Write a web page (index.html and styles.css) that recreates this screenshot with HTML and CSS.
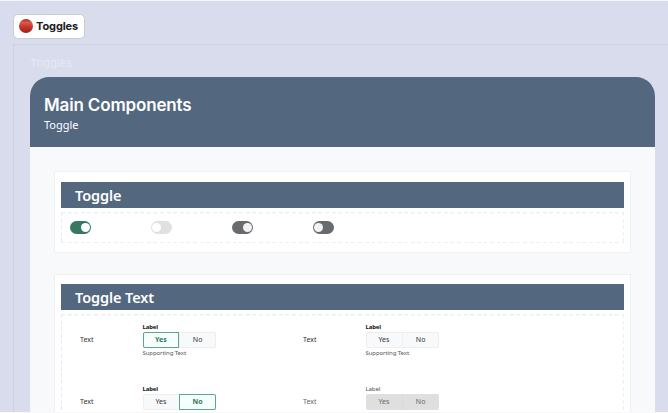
FILE: index.html
```html
<!DOCTYPE html>
<html lang="en">
<head>
    <meta charset="UTF-8">
    <meta name="viewport" content="width=device-width, initial-scale=1.0">
    <title>Toggles</title>
    <link rel="stylesheet" href="styles.css">
</head>
<body>
    <div class="page-tag">
        <svg class="dot" width="14" height="14" viewBox="0 0 14 14">
            <defs>
                <linearGradient id="red" x1="0" y1="0" x2="0" y2="1">
                    <stop offset="0" stop-color="#a92a24"/>
                    <stop offset="0.25" stop-color="#dc5a4c"/>
                    <stop offset="0.55" stop-color="#cb3529"/>
                    <stop offset="1" stop-color="#96231e"/>
                </linearGradient>
            </defs>
            <circle cx="7" cy="7" r="7" fill="url(#red)"/>
        </svg>
        <span>Toggles</span>
    </div>

    <div class="frame">
        <div class="frame-name">Toggles</div>
        <main class="panel">
            <header>
                <h1>Main Components</h1>
                <p>Toggle</p>
            </header>

            <section class="card">
                <h2>Toggle</h2>
                <div class="variants switches">
                    <span class="switch on green"></span>
                    <span class="switch off light"></span>
                    <span class="switch on gray"></span>
                    <span class="switch off gray"></span>
                </div>
            </section>

            <section class="card">
                <h2>Toggle Text</h2>
                <div class="variants fields">
                    <div class="field">
                        <span class="name">Text</span>
                        <div class="control">
                            <b class="label">Label</b>
                            <div class="choice"><span class="selected">Yes</span><span>No</span></div>
                            <span class="support">Supporting Text</span>
                        </div>
                    </div>
                    <div class="field">
                        <span class="name">Text</span>
                        <div class="control">
                            <b class="label">Label</b>
                            <div class="choice"><span>Yes</span><span>No</span></div>
                            <span class="support">Supporting Text</span>
                        </div>
                    </div>
                    <div class="field">
                        <span class="name">Text</span>
                        <div class="control">
                            <b class="label">Label</b>
                            <div class="choice"><span>Yes</span><span class="selected">No</span></div>
                            <span class="support">Supporting Text</span>
                        </div>
                    </div>
                    <div class="field disabled">
                        <span class="name">Text</span>
                        <div class="control">
                            <b class="label">Label</b>
                            <div class="choice"><span>Yes</span><span>No</span></div>
                            <span class="support">Supporting Text</span>
                        </div>
                    </div>
                </div>
            </section>
        </main>
    </div>
</body>
</html>
```

FILE: styles.css
```css
* {
    box-sizing: border-box;
}
html {
    background: #f8f8fb;
    overflow: hidden;
}
body {
    margin: 0;
    height: 412px;
    padding: 13px 0 0 13px;
    border-top: 1px solid #f6f6fa;
    background: #d9dcec;
    font-family: "Noto Sans", sans-serif;
    overflow: hidden;
}
.page-tag {
    display: flex;
    align-items: center;
    gap: 3px;
    width: 72px;
    height: 25px;
    padding: 0 0 1px 5px;
    border: 1px solid #cccdd4;
    border-radius: 5px;
    background: #fff;
    color: #222;
    font: bold 11px Inter, sans-serif;
    letter-spacing: -0.1px;
}
.dot {
    flex: none;
}
.frame {
    height: 373px;
    margin-top: 5px;
    padding: 10px 0 0 16px;
    border: 1px solid #cdd0e0;
    border-width: 1px 0 0 1px;
    overflow: hidden;
}
.frame-name {
    height: 22px;
    color: #e6e8f5;
    font: 11px/16px Inter, sans-serif;
    letter-spacing: 0.15px;
}
.panel {
    width: 625px;
    height: 340px;
    border-radius: 19px 19px 0 0;
    background: #f8f9fb;
    overflow: hidden;
}
header {
    height: 70px;
    padding: 18px 14px 0;
    background: #53677f;
    color: #fff;
}
h1 {
    margin: 0;
    font: 600 17px/21px Inter, sans-serif;
    letter-spacing: -0.15px;
}
header p {
    margin: 0;
    font-size: 11px;
    line-height: 17px;
}
.card {
    width: 577px;
    margin: 24px 0 0 24px;
    padding: 10px 6px 9px;
    border: 1px solid #eef0f2;
    background: #fff;
}
.card + .card {
    margin-top: 21px;
    padding-top: 9px;
}
h2 {
    height: 26px;
    margin: 0 0 4px;
    padding-left: 14px;
    background: #53677f;
    color: #fff;
    font: 600 14.5px/26px "Noto Sans", sans-serif;
    letter-spacing: -0.1px;
}
.variants {
    width: 563px;
    background:
        repeating-linear-gradient(90deg, #eeeff1 0 4px, transparent 4px 6.6px) top / 100% 1.5px no-repeat,
        repeating-linear-gradient(90deg, #eeeff1 0 4px, transparent 4px 6.6px) bottom / 100% 1.5px no-repeat,
        repeating-linear-gradient(#e9eaec 0 4px, transparent 4px 6.6px) left / 1px 100% no-repeat,
        repeating-linear-gradient(#eeeff1 0 4px, transparent 4px 6.6px) right / 1.5px 100% no-repeat;
}
.switches {
    display: grid;
    grid-template-columns: repeat(4, 81px);
    align-items: center;
    height: 31px;
    padding-left: 8.5px;
}
.switch {
    display: flex;
    align-items: center;
    width: 21.5px;
    height: 13px;
    padding: 0 1.5px;
    border-radius: 7px;
    background: #676b6e;
}
.switch::after {
    content: "";
    width: 9px;
    height: 9px;
    border-radius: 50%;
    background: #f2f2f4;
}
.on {
    justify-content: flex-end;
}
.green {
    background: #37785f;
}
.light {
    background: #e0e0e0;
}
.green::after,
.light::after {
    background: #fff;
}
.fields {
    display: grid;
    grid-template-columns: 223px 223px;
    grid-auto-rows: 61.4px;
    height: 200px;
    padding: 8.2px 0 0 19px;
}
.field {
    display: flex;
    color: #333;
    font-size: 7px;
}
.name {
    width: 62.5px;
    padding-top: 10px;
    line-height: 16px;
}
.control {
    width: 73.5px;
}
.label {
    display: block;
    height: 10px;
    color: #111;
    font-size: 6px;
    line-height: 10px;
    letter-spacing: -0.15px;
}
.choice {
    display: flex;
    height: 16px;
    border-radius: 2px;
    background: #f8f9fb;
    box-shadow: inset 0 0 0 1px #eceef0;
}
.choice span {
    flex: 1;
    line-height: 16px;
    text-align: center;
}
.choice span + span {
    box-shadow: inset 1px 0 #eff0f2;
}
.choice .selected,
.choice span + .selected {
    border-radius: 2px 0 0 2px;
    background: #f5fffc;
    box-shadow: inset 0 0 0 1px #5da58d;
    color: #2b765d;
    font-weight: bold;
}
.choice span + .selected {
    border-radius: 0 2px 2px 0;
}
.support {
    display: block;
    color: #555;
    font-size: 6px;
    line-height: 10px;
    letter-spacing: -0.08px;
    white-space: nowrap;
}
.disabled,
.disabled .label {
    color: #666;
}
.disabled .label {
    font-weight: 500;
}
.disabled .choice {
    background: #dfdfdf;
    box-shadow: none;
}
.disabled .choice span + span {
    box-shadow: inset 1px 0 #dadadb;
}
```
